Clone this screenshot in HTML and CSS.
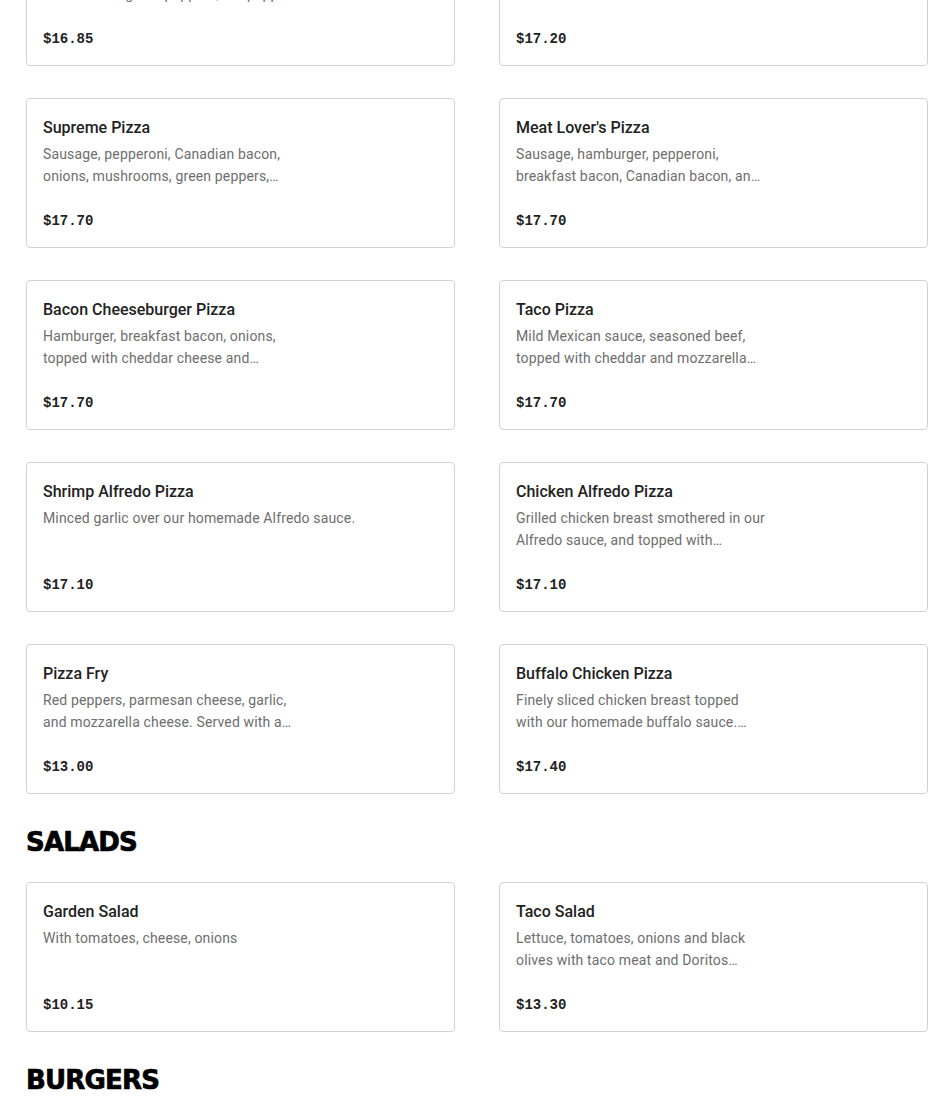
FILE: index.html
```html
<!DOCTYPE html>
<html lang="en">
<head>
<meta charset="utf-8">
<title>Menu</title>
<link rel="stylesheet" href="styles.css">
</head>
<body>
<main class="menu">
  <section class="group">
    <div class="grid">
      <article class="card">
        <h3 class="name">Veggie Pizza</h3>
        <p class="desc"><span>Mushrooms, onions, black olives, tomatoes,</span><span>and a mix of green peppers, hot peppers…</span></p>
        <p class="price">$16.85</p>
      </article>
      <article class="card">
        <h3 class="name">Hawaiian Pizza</h3>
        <p class="desc"><span>Canadian bacon and pineapple.</span></p>
        <p class="price">$17.20</p>
      </article>
      <article class="card">
        <h3 class="name">Supreme Pizza</h3>
        <p class="desc"><span>Sausage, pepperoni, Canadian bacon,</span><span>onions, mushrooms, green peppers,…</span></p>
        <p class="price">$17.70</p>
      </article>
      <article class="card">
        <h3 class="name">Meat Lover's Pizza</h3>
        <p class="desc"><span>Sausage, hamburger, pepperoni,</span><span>breakfast bacon, Canadian bacon, an…</span></p>
        <p class="price">$17.70</p>
      </article>
      <article class="card">
        <h3 class="name">Bacon Cheeseburger Pizza</h3>
        <p class="desc"><span>Hamburger, breakfast bacon, onions,</span><span>topped with cheddar cheese and…</span></p>
        <p class="price">$17.70</p>
      </article>
      <article class="card">
        <h3 class="name">Taco Pizza</h3>
        <p class="desc"><span>Mild Mexican sauce, seasoned beef,</span><span>topped with cheddar and mozzarella…</span></p>
        <p class="price">$17.70</p>
      </article>
      <article class="card">
        <h3 class="name">Shrimp Alfredo Pizza</h3>
        <p class="desc"><span>Minced garlic over our homemade Alfredo sauce.</span></p>
        <p class="price">$17.10</p>
      </article>
      <article class="card">
        <h3 class="name">Chicken Alfredo Pizza</h3>
        <p class="desc"><span>Grilled chicken breast smothered in our</span><span>Alfredo sauce, and topped with…</span></p>
        <p class="price">$17.10</p>
      </article>
      <article class="card">
        <h3 class="name">Pizza Fry</h3>
        <p class="desc"><span>Red peppers, parmesan cheese, garlic,</span><span>and mozzarella cheese. Served with a…</span></p>
        <p class="price">$13.00</p>
      </article>
      <article class="card">
        <h3 class="name">Buffalo Chicken Pizza</h3>
        <p class="desc"><span>Finely sliced chicken breast topped</span><span>with our homemade buffalo sauce.…</span></p>
        <p class="price">$17.40</p>
      </article>
    </div>
  </section>

  <section class="group">
    <h2 class="heading">SALADS</h2>
    <div class="grid">
      <article class="card">
        <h3 class="name">Garden Salad</h3>
        <p class="desc"><span>With tomatoes, cheese, onions</span></p>
        <p class="price">$10.15</p>
      </article>
      <article class="card">
        <h3 class="name">Taco Salad</h3>
        <p class="desc"><span>Lettuce, tomatoes, onions and black</span><span>olives with taco meat and Doritos…</span></p>
        <p class="price">$13.30</p>
      </article>
    </div>
  </section>

  <section class="group">
    <h2 class="heading">BURGERS</h2>
    <div class="grid">
      <article class="card">
        <h3 class="name">Cheeseburger</h3>
        <p class="desc"><span>Quarter pound burger with cheese</span></p>
        <p class="price">$9.50</p>
      </article>
      <article class="card">
        <h3 class="name">Bacon Cheeseburger</h3>
        <p class="desc"><span>Quarter pound burger with bacon and cheese</span></p>
        <p class="price">$10.50</p>
      </article>
    </div>
  </section>
</main>
</body>
</html>
```

FILE: styles.css
```css
* { box-sizing: border-box; }

html, body {
  margin: 0;
  padding: 0;
  background: #ffffff;
}

body {
  font-family: "Roboto", "Liberation Sans", sans-serif;
  color: #222222;
  overflow: hidden;
}

.menu {
  margin-top: -84px;
  padding: 0 22px 0 26px;
}

.group {
  margin-bottom: 32px;
}

.heading {
  margin: 0 0 24px;
  font-family: "DejaVu Sans", sans-serif;
  font-weight: 900;
  font-size: 26px;
  line-height: 32px;
  letter-spacing: -0.8px;
  color: #000000;
  -webkit-text-stroke: 0.7px #000000;
}

.grid {
  display: grid;
  grid-template-columns: 1fr 1fr;
  column-gap: 44px;
  row-gap: 32px;
}

.card {
  border: 1px solid #d2d2d2;
  border-radius: 4px;
  padding: 16px;
  height: 150px;
  display: flex;
  flex-direction: column;
}

.name {
  margin: 1px 0 0;
  font-size: 16px;
  line-height: 24px;
  font-weight: 500;
  color: #222222;
}

.desc {
  margin: 3px 0 0;
  font-size: 14px;
  line-height: 22px;
  letter-spacing: 0.15px;
  color: #6e6e6e;
  height: 44px;
}

.desc span {
  display: block;
  white-space: nowrap;
}

.price {
  margin: auto 0 0;
  font-family: "Liberation Mono", monospace;
  font-weight: 700;
  font-size: 14px;
  line-height: 20px;
  color: #222222;
}
```
